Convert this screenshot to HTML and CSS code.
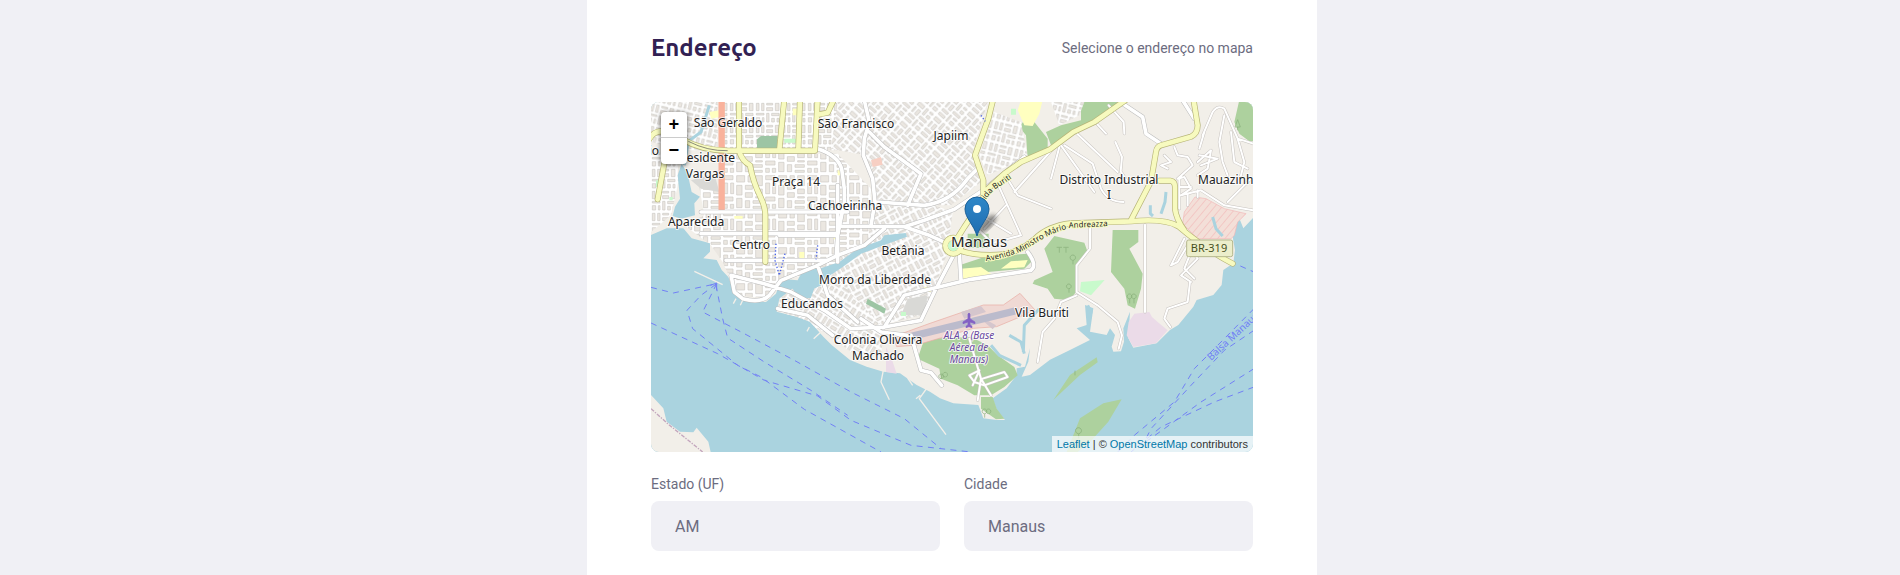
FILE: index.html
```html
<!DOCTYPE html>
<html lang="pt-BR">
<head>
<meta charset="utf-8">
<meta name="viewport" content="width=device-width, initial-scale=1">
<title>Endereço</title>
<link rel="stylesheet" href="styles.css">
</head>
<body>
<main class="page">
<form class="card">
<header class="section-header">
<h2 class="section-title">Endereço</h2>
<span class="section-hint">Selecione o endereço no mapa</span>
</header>

<div class="map">
<svg class="map-canvas" viewBox="0 0 602 350" preserveAspectRatio="xMidYMid slice" role="img" aria-label="Mapa de Manaus">
<defs>
<pattern id="grid" width="126" height="108" patternUnits="userSpaceOnUse">
<rect class="street" width="126" height="108"/>
<path class="block" d="M5 5h24v19H5zM39 5h13v19H39zM62 5h20v30H62zM92 5h28v12H92zM5 34h16v29H5zM31 34h21v12H31zM31 56h21v14H31zM62 45h20v14H62zM92 27h12v32H92zM113 27h9v32h-9zM5 73h16v28H5zM31 80h13v21H31zM54 80h28v8H54zM54 97h28v6H54zM92 69h28v12H92zM92 91h11v12H92zM112 91h10v12h-10zM62 68h20v4H62z"/>
</pattern>
<pattern id="fine" width="78" height="66" patternUnits="userSpaceOnUse">
<rect class="street" width="78" height="66"/>
<path class="block" d="M4 4h8v22H4zM20 4h7v22h-7zM35 4h18v5H35zM35 17h18v9H35zM61 4h11v22H61zM4 34h23v5H4zM4 47h10v13H4zM22 47h5v13h-5zM35 34h7v26h-7zM50 34h22v7H50zM50 49h8v11h-8zM66 49h6v11h-6z"/>
</pattern>
<pattern id="diagonal" href="#fine" patternTransform="rotate(-48)"/>
<pattern id="slope" href="#fine" patternTransform="rotate(-28)"/>
<pattern id="tilt" href="#fine" patternTransform="rotate(14)"/>
<pattern id="descent" href="#fine" patternTransform="rotate(32)"/>
<pattern id="hatch" width="17" height="17" patternUnits="userSpaceOnUse" patternTransform="rotate(40)">
<rect class="zone" width="17" height="17"/><path class="hatch-line" d="M1 0v17"/>
</pattern>
<linearGradient id="pin" x2="0" y2="1"><stop offset="0" stop-color="#2e87c8"/><stop offset="1" stop-color="#1f6cb0"/></linearGradient>
<filter id="soft"><feGaussianBlur stdDeviation="2"/></filter>
<clipPath id="land-clip"><use href="#land"/></clipPath>
<g id="avenues">
<path d="M-5 112Q8 84 42 88M95 112Q150 145 230 146H492L500 -10M264 -10V146Q272 176 297 190Q306 240 328 284Q343 315 343 340V480M400 -10L385 144M447 -10L442 144M500 38L530 32L550 -10M48 140L20 292"/>
<path d="M1027 -10L1012 50L972 160L997 235V290L940 375L915 415M1000 270L1060 215L1110 180L1197 142L1267 90L1330 60L1430 -10"/>
<path d="M925 445Q980 465 1060 457Q1110 447 1150 412Q1190 372 1260 364L1440 358Q1540 348 1582 373Q1660 440 1745 485M1627 -10L1640 70Q1640 95 1620 104L1530 130Q1517 134 1515 150L1500 238L1440 354M1525 236H1558Q1572 238 1572 255V320Q1575 350 1600 385"/>
<circle cx="907" cy="431" r="24"/>
</g>
<g id="roads">
<path d="M640 -5L655 60L640 110L637 160L665 230L672 300L660 370M655 90L700 135L810 215L770 310M500 140Q560 160 572 200L580 260V300L560 400L556 460M560 372L760 374L830 398L890 425M760 374L820 355L910 322L1000 262L1120 165M680 300L820 310Q900 300 950 230L980 200M385 400H560M150 330H590M560 250V480M150 395H560M225 475H530"/>
<path d="M240 520L250 570L275 590Q330 605 355 580L390 535L500 490L560 460L640 430L700 380M240 520L340 545L420 570L520 625L600 680L700 675L810 655L850 570L910 455M700 675L760 580L960 532L1140 505Q1160 490 1130 450M500 490L530 580L620 660M380 620L470 640L545 700M925 455L930 535"/>
<path d="M780 700L810 805L840 812L872 850M630 650L690 690L770 700M1400 -5L1475 45L1485 95L1530 125M1595 -5L1630 50"/>
</g>
<g id="lanes">
<path d="M1275 92L1400 210M1340 68L1365 95M1373 10L1418 60L1420 95M1393 120L1413 165L1409 208M1409 208L1430 240M1240 130L1325 185L1350 260Q1370 300 1418 300M1230 130L1330 270M1225 135L1200 230M1210 135L1090 270M1040 245L1110 400M1060 215L1100 280L1200 320M1110 400L1000 430M990 340L1080 395M970 370L1030 430M1065 310L1000 380"/>
<path d="M1317 368V440L1277 490V570L1340 610L1400 660L1413 700L1403 740M1277 580L1230 600L1210 650L1175 690L1160 780M1482 368V630M1617 540L1610 600L1550 620L1540 650L1558 675M1600 410L1560 490L1580 480L1610 430M1610 430L1640 470L1590 520L1620 540M1620 450L1600 500L1630 530"/>
<path d="M1655 100L1685 30Q1700 8 1720 20L1760 110L1806 125M1720 40L1705 120L1715 180L1730 220M1740 90L1750 180L1790 200M1760 110L1780 180L1770 220M1640 180L1680 145L1670 200L1640 220M1645 160L1700 170L1650 190M1580 230L1600 225L1620 260L1590 280L1650 265L1720 310L1806 325M1585 230V320M1610 275V310M1640 265V285M1585 255H1620M1800 230L1730 300M1660 90L1645 140M1570 135L1580 160L1610 165L1625 190L1580 230M1540 160L1560 180L1530 190L1550 200"/>
<path d="M955 710L990 830L1020 880M995 830L1060 810L1070 825L1000 850L970 840L955 820L985 805L965 850M990 830L980 895"/>
</g>
</defs>

<g transform="scale(.3333333)">
<rect class="water" width="1806" height="1050"/>
<path id="land" class="land" d="M-3 -6H1809V345L1777 379L1767 354L1747 364L1745 404L1752 444L1747 484L1717 504L1712 549L1687 579L1637 594L1627 614L1582 669L1557 684L1517 724L1447 737L1432 709L1437 629L1417 679L1419 719L1410 748L1387 749L1382 734L1392 699L1377 679L1367 699L1317 689L1327 619L1302 609L1307 669L1277 679L1317 714L1257 744L1197 773L1137 819L1112 824L1132 779L1137 739L1122 794L1097 799V819L1067 859L1025 889L1037 924L1062 954H1037L997 949L982 909L907 904L867 889L837 869L797 849L747 814L697 809L647 794L597 774L542 729L517 704L477 659L437 644L377 629L385 590L425 560L440 590L480 588L490 560L512 550L505 500L455 505L440 535L390 530L375 575L345 600H300L262 585L240 545L232 525L212 504L197 474L157 469L177 449V424L122 409L97 379H47L0 399Z"/>
<path class="land" d="M0 879L37 919L47 959L87 989L127 991L137 977L172 1019L179 1050H0Z"/>

<path class="green" d="M1110 -6H1170L1160 20L1150 60L1190 110L1190 145L1130 170L1125 100L1105 75L1120 55ZM1290 -6H1430L1330 60L1290 72L1240 110L1200 130L1185 90L1230 70L1290 55ZM1765 -6H1809V118H1795L1765 95L1750 60ZM1180 440L1210 402L1300 422L1310 450L1280 485L1275 570L1255 595L1210 590L1190 560L1145 545L1150 535L1205 510ZM1385 384H1462V420L1435 440L1475 515L1470 560L1452 620L1430 610L1420 560L1380 510ZM925 490L1000 465L1130 455L1150 470L1120 500L1010 510L930 520ZM950 395H1013V438H950ZM820 710L960 705L1010 730L1040 760L1090 795L1100 820L1060 855L1020 880L970 880L920 850L870 830L865 800L800 770ZM990 885L1025 885L1037 920L1060 950L1035 952L990 920Z"/>
<path class="green" d="M1207 894L1257 819L1337 766L1340 781L1287 819ZM1247 1050L1287 949L1357 904L1412 892L1372 959L1317 1020L1280 1050Z"/>
<path class="park" d="M1290 540L1361 534L1320 580L1287 568ZM225 482L280 475L245 510ZM485 427L505 425L500 470L480 475ZM370 430L385 420L380 480L395 530L370 500Z"/>
<path class="sand" d="M1110 -6H1175L1165 35L1145 72L1120 70L1100 25ZM930 500L990 495L1020 515L990 525L930 535ZM1080 478L1130 474L1120 496L1050 500Z"/>
<path class="industrial" d="M1450 635L1495 630L1503 645L1520 660L1550 685L1515 724L1447 735L1427 700L1433 660ZM705 735L722 770L737 815L705 810Z"/>
<path fill="url(#hatch)" class="zone-edge" d="M1600 330L1632 285L1665 290L1720 320L1785 335L1760 360L1750 400L1740 410H1640L1595 365Z"/>

<g clip-path="url(#land-clip)">
<path fill="url(#tilt)" d="M0 0H200V145H110L0 120Z"/>
<path fill="url(#fine)" d="M0 150H75L85 230L60 340L0 390ZM205 0H620V145H205Z"/>
<path fill="url(#grid)" d="M135 200L205 270V155H560L660 260V400L640 430L530 500L380 540L350 590L260 580L215 480L180 430L100 370L160 340Z"/>
<path fill="url(#diagonal)" d="M560 0H1010L965 150L990 240L900 310L680 310L640 160L540 140Z"/>
<path fill="url(#tilt)" d="M1030 30L1110 60L1130 165L1010 220L985 160ZM1200 0H1300L1285 40L1225 70Z"/>
<path fill="url(#slope)" d="M660 310H850L905 330L890 450L850 560L810 640L690 670L510 560L560 470L650 430Z"/>
<path fill="url(#descent)" d="M390 570L530 500L700 680L690 760L600 750L520 690L380 625Z"/>
</g>
<path class="waste" d="M120 235L190 215L205 270L150 260ZM770 590L830 580L820 640L750 640Z"/>
<path class="cemetery" d="M318 112L330 102H380V140H318ZM650 590L705 620L700 635L645 605Z"/>
<path class="school" d="M660 175L690 165L695 188L665 195Z"/>
<path class="park" d="M400 110H435V122H400ZM15 235H25V255H15ZM750 630H765V642H750ZM55 285H65V295H55ZM1080 20H1095V38H1080Z"/>
<path class="sand" d="M175 30L205 25V45L180 50ZM425 20H440V40H425ZM250 342H275V350H250ZM445 450H460V470H445ZM548 395H558V412H548ZM560 205H570V220H560ZM820 555H840V570H820Z"/>
<path class="water" d="M92 185L110 215L122 270L147 284L130 304L132 340L90 350L65 342L72 314L87 290L80 220ZM505 500L565 480L620 440L690 415L700 400L764 393L768 404L710 425L630 455L575 495L530 525L500 550L440 550L455 508Z"/>
<path class="creek" d="M175 10L150 90L112 118L100 190M1545 270L1542 300L1530 335M1498 310V335L1506 342M1685 345L1695 380L1715 402M1165 620L1120 670L1117 750M1075 700L1110 720L1120 755M1020 730L1045 760L1110 790M1310 610L1320 630L1312 670"/>

<path class="airport" d="M727 704L837 664L997 609H1057L1107 574L1152 624L1097 649L1037 674L967 679L797 729L737 734Z"/>
<path class="apron" d="M930 630L990 612L1005 630L940 650ZM1000 650L1035 670L1025 682L1000 660Z"/>
<path class="runway" d="M757 709L1092 627"/>
<path class="trunk" d="M212 -6V327"/>
<use href="#lanes" class="lane-case"/><use href="#lanes" class="lane"/>
<use href="#roads" class="road-case"/><use href="#roads" class="road"/>
<use href="#avenues" class="avenue-case"/><use href="#avenues" class="avenue"/>
<path class="thin-line" d="M112 118Q170 148 230 146"/>
<circle class="park" cx="907" cy="431" r="16"/>
<path class="pier" d="M130 508L215 548M255 590L247 605M275 595L268 610M475 675L468 688M510 690L488 710M700 790L690 840L715 893M770 828L785 850M830 855L805 890L885 998M808 880L795 890"/>
<path class="steps" d="M375 425L372 475L385 520L402 455M500 430L495 472M990 40L1003 58"/>
<path class="ferry" d="M0 556L67 573L197 545L150 580L108 625L125 680L260 790L330 825L460 922L600 1000L690 1050M0 663L200 755L340 835L500 882L600 955L780 1030L960 1050M197 545L155 630L280 695L430 775L600 870L760 950L870 1040M195 550L215 650L230 708L340 780L480 865L590 940M1809 620L1720 710L1630 800L1570 900L1450 1000L1400 1050M1809 685L1720 745L1620 850L1500 980L1480 1020M1809 800L1650 900L1540 980L1470 1030M1809 855L1690 900L1530 975L1440 1050M1768 492L1809 510"/>
<path class="arrow" d="M178 550L197 543L197 565"/>
<path class="boundary" d="M0 920L50 965L155 1050"/>
<path class="plane" d="M951 636Q954 630 957 636V650L972 660V665L957 660V668L963 673V677L954 674L945 677V673L951 668V660L936 665V660L951 650Z"/>
<path class="trees" d="M1225 452v-15m-8-1h16M1245 452v-15m-8-1h16M1265 475a8 8 0 1 1 1 0v12M1253 560a7 7 0 1 1 1 0v12M1435 590a7 7 0 1 1 1 0v14M1448 590a7 7 0 1 1 1 0v14M870 830a7 7 0 1 1 1 0v-12M882 825a7 7 0 1 1 1 0M1000 935a7 7 0 1 1 1 0v12M1012 935a7 7 0 1 1 1 0M1282 995a9 9 0 1 1 1 0v14M1272 820v-14M1752 75l8-22 8 22zm8 0v10"/>
<rect class="shield" x="1607" y="414" width="138" height="50" rx="6"/>
</g>

<path id="buriti" class="guide" d="M330 106Q336 93 346 86L375 67"/>
<path id="ministro" class="guide" d="M335 159Q364 155 383 142Q403 129 420 126L475 123"/>
<path id="balsa" class="guide" d="M560 259L625 199"/>

<g class="labels">
<text x="77" y="25">São Geraldo</text><text x="205" y="26">São Francisco</text><text x="300" y="38">Japiim</text>
<text x="84" y="60" class="end">esidente</text><text x="54" y="76">Vargas</text><text x="8" y="53" class="end">io</text>
<text x="145" y="84">Praça 14</text><text x="194" y="108">Cachoeirinha</text><text x="45" y="124">Aparecida</text>
<text x="100" y="147">Centro</text><text x="252" y="153">Betânia</text><text x="224" y="182">Morro da Liberdade</text>
<text x="161" y="206">Educandos</text><text x="227" y="242">Colonia Oliveira</text><text x="227" y="258">Machado</text>
<text x="391" y="215">Vila Buriti</text><text x="458" y="82">Distrito Industrial</text><text x="458" y="97">I</text>
<text x="547" y="82" class="start">Mauazinh</text>
<text x="328" y="145" class="city">Manaus</text>
</g>
<g class="labels airport-label"><text x="318" y="237">ALA 8 (Base</text><text x="318" y="249">Aérea de</text><text x="318" y="261">Manaus)</text></g>
<text class="shield-label" x="558" y="150">BR-319</text>
<text class="road-label"><textPath href="#buriti">enida Buriti</textPath></text>
<text class="road-label"><textPath href="#ministro">Avenida Ministro Mário Andreazza</textPath></text>
<text class="ferry-label"><textPath href="#balsa">Balsa Manaus</textPath></text>

<ellipse class="pin-shadow" cx="336" cy="122" rx="12" ry="5" transform="rotate(-45 336 122)"/>
<path class="pin" d="M326 134C323 123 314 116 314 107A12 12 0 0 1 338 107C338 116 329 123 326 134Z"/>
<circle class="pin-dot" cx="326" cy="107" r="4"/>
</svg>
<div class="zoom-control">
<button type="button" class="zoom-button" aria-label="Aproximar">+</button>
<button type="button" class="zoom-button" aria-label="Afastar">−</button>
</div>
<div class="attribution"><a href="#">Leaflet</a> | © <a href="#">OpenStreetMap</a> contributors</div>
</div>

<div class="field-group">
<div class="field"><label for="uf">Estado (UF)</label><input id="uf" name="uf" type="text" value="AM"></div>
<div class="field"><label for="city">Cidade</label><input id="city" name="city" type="text" value="Manaus"></div>
</div>
</form>
</main>
</body>
</html>
```

FILE: styles.css
```css
* { box-sizing: border-box; margin: 0; padding: 0; }
body { background: #f0f0f5; color: #6c6c80; font-family: Roboto, "Liberation Sans", sans-serif; font-size: 14px; }
.page { display: flex; justify-content: center; padding: 0 16px 0 20px; min-height: 100vh; }
.card { width: 100%; max-width: 730px; padding: 32px 64px 24px; background: #fff; }
.section-header { display: flex; justify-content: space-between; align-items: center; min-height: 32px; margin-bottom: 38px; }
.section-title { color: #322153; font: bold 24px/32px Ubuntu, "Noto Sans", sans-serif; }
.section-hint { line-height: 16px; }

.map { position: relative; height: 350px; margin-bottom: 24px; overflow: hidden; border-radius: 8px; background: #aad3df; }
.map-canvas { display: block; width: 100%; height: 100%; }
.zoom-control { position: absolute; top: 10px; left: 10px; width: 26px; border-radius: 4px; background: #fff; box-shadow: 0 1px 5px rgba(0, 0, 0, .65); }
.zoom-button { display: block; width: 26px; height: 26px; border: 0; background: transparent; color: #000; font: bold 18px/26px "Liberation Mono", monospace; cursor: pointer; }
.zoom-button:first-child { border-bottom: 1px solid #ccc; }
.attribution { position: absolute; right: 0; bottom: 0; padding: 0 5px; background: rgba(255, 255, 255, .7); color: #333; font: 11px/16px "Liberation Sans", Arial, sans-serif; }
.attribution a { color: #0078a8; text-decoration: none; }

.field-group { display: flex; gap: 24px; }
.field { display: flex; flex: 1; flex-direction: column; gap: 8px; min-width: 0; }
.field label { line-height: 17px; }
.field input { width: 100%; height: 50px; padding: 16px 24px; border: 0; border-radius: 8px; background: #f0f0f5; color: #6c6c80; font: 16px/18px Roboto, "Liberation Sans", sans-serif; }

.water { fill: #aad3df; }
.land { fill: #f2efe9; }
.green { fill: #add19e; }
.park { fill: #c8facc; }
.sand { fill: #ffffc0; }
.industrial { fill: #ebdbe8; }
.zone { fill: #f3dfd8; }
.hatch-line { stroke: #f2b6b6; stroke-width: 2; }
.zone-edge { stroke: #f2b6b6; stroke-width: 2; }
.waste { fill: #d9d9d6; }
.cemetery { fill: #9dc5a4; }
.school { fill: #f7cfc3; }
.street { fill: #fff; }
.block { fill: #ebe7e1; stroke: #cbc8c4; stroke-width: 2; }
.creek, .runway, .trunk, .pier, .ferry, .boundary, .arrow, .steps, .thin-line, .trees, .guide { fill: none; }
.creek { stroke: #aad3df; stroke-width: 9; stroke-linejoin: round; }
.airport { fill: #f0d9d4; stroke: #e8aaa2; stroke-width: 2; }
.apron { fill: #d5c6cd; }
.runway { stroke: #bbbbcc; stroke-width: 22; }
.trunk { stroke: #f9b29c; stroke-width: 19; }
.lane-case, .lane, .road-case, .road, .avenue-case, .avenue { fill: none; stroke-linejoin: round; stroke-linecap: round; }
.lane-case { stroke: #c8c4c0; stroke-width: 9; }
.lane { stroke: #fff; stroke-width: 6; }
.road-case { stroke: #bbb; stroke-width: 14; }
.road { stroke: #fff; stroke-width: 11; }
.avenue-case { stroke: #b7b578; stroke-width: 18; }
.avenue { stroke: #f7fabf; stroke-width: 14; }
.thin-line { stroke: #555; stroke-width: 2; }
.pier { stroke: #f2efe9; stroke-width: 4; }
.steps { stroke: #4a64e8; stroke-width: 4; stroke-dasharray: 4 6; }
.ferry { stroke: #7180f5; stroke-width: 3; stroke-dasharray: 18 16; }
.arrow { stroke: #7180f5; stroke-width: 3; }
.boundary { stroke: #c3a5bd; stroke-width: 4; stroke-dasharray: 12 4 4 4; }
.plane { fill: #8461c4; stroke: #8461c4; stroke-width: 2; }
.trees { stroke: #86ad79; stroke-width: 2; }
.shield { fill: #eceecb; stroke: #b4b78c; stroke-width: 3; }

.labels { fill: #222; stroke: rgba(255, 255, 255, .75); stroke-width: 2; stroke-linejoin: round; paint-order: stroke; text-anchor: middle; font: 12px "Noto Sans", sans-serif; }
.labels .end { text-anchor: end; }
.labels .start { text-anchor: start; }
.labels .city { font-size: 15px; }
.airport-label { fill: #6a48a0; font-size: 10px; font-style: italic; }
.shield-label { fill: #47501d; text-anchor: middle; font: 11px "Noto Sans", sans-serif; }
.road-label { fill: #222; stroke: #f7fabf; stroke-width: 2; paint-order: stroke; font: 8px "Noto Sans", sans-serif; }
.ferry-label { fill: #7180f5; font: 10px "Noto Sans", sans-serif; }
.pin-shadow { fill: #222; opacity: .5; filter: url(#soft); }
.pin { fill: url(#pin); stroke: #1b6098; stroke-width: 1; }
.pin-dot { fill: #fff; }

@media (max-width: 600px) {
  .card { padding: 24px; }
  .field-group { flex-direction: column; }
}
```
